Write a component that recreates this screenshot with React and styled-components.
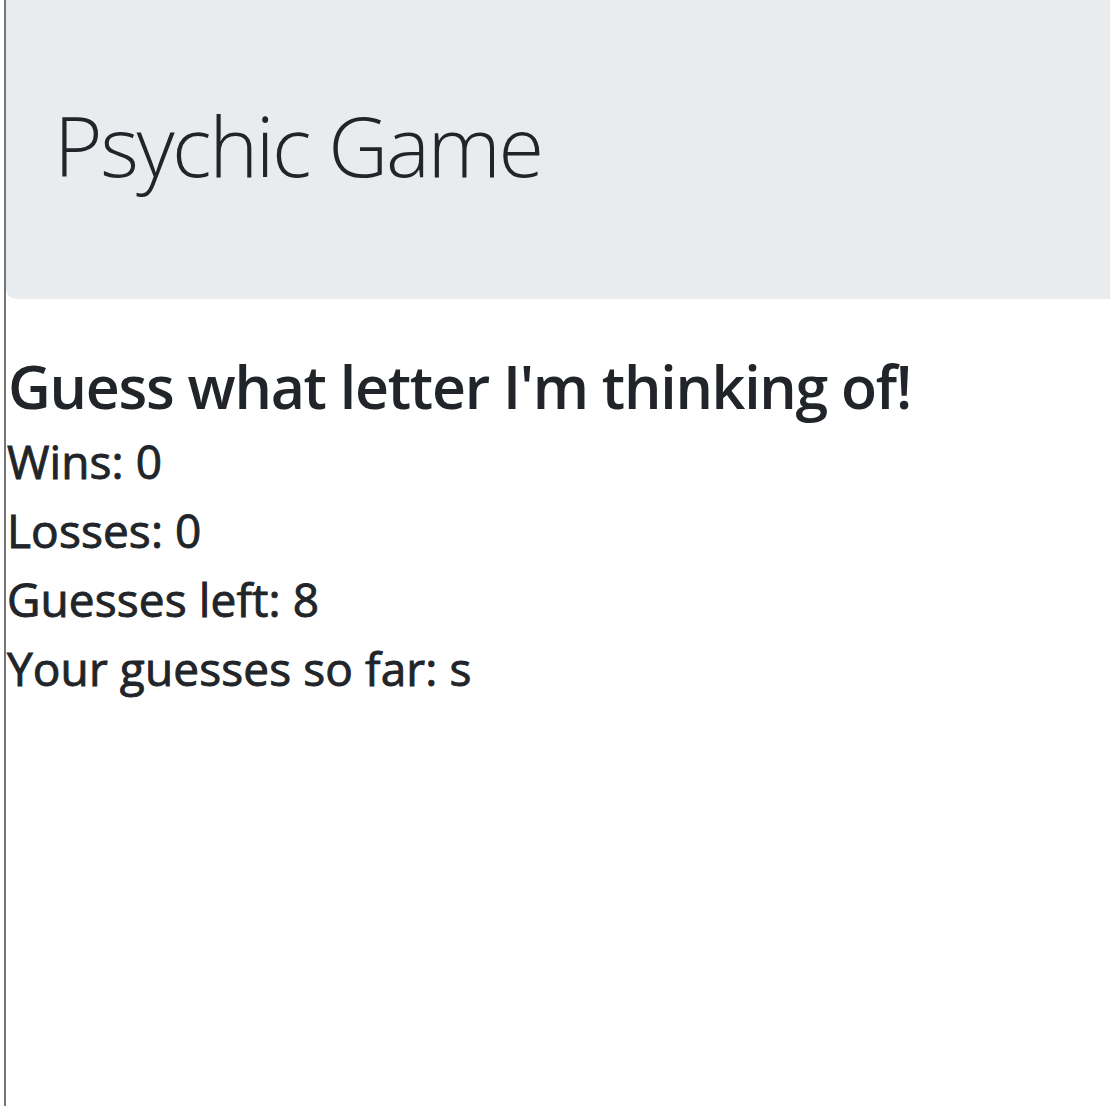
import React from "react";
import styled, { createGlobalStyle } from "styled-components";

const Global = createGlobalStyle`
  html, body { margin: 0; padding: 0; background: #fff; }
  body { font-family: "Open Sans", "Noto Sans", sans-serif; color: #212529; }
`;

const Page = styled.div`
  margin-left: 4px;
  border-left: 2px solid #767676;
  min-height: 1106px;
  box-sizing: border-box;
`;

const Jumbotron = styled.header`
  background: #e9ecef;
  border-bottom-left-radius: 10px;
  padding: 93px 48px 103px 48px;
`;

const Title = styled.h1`
  margin: 0;
  font-size: 83px;
  line-height: 103px;
  font-weight: 300;
  letter-spacing: -2.4px;
`;

const Heading = styled.h2`
  margin: 50px 0 4px 2px;
  font-size: 59px;
  line-height: 74px;
  font-weight: 600;
  letter-spacing: -1.25px;
`;

const Stat = styled.p`
  margin: 0 0 0 1px;
  font-size: 46px;
  line-height: 69px;
  font-weight: 400;
  letter-spacing: 0.1px;
  -webkit-text-stroke: 0.9px #212529;
`;

export default function App() {
  return (
    <>
      <Global />
      <Page>
        <Jumbotron>
          <Title>Psychic Game</Title>
        </Jumbotron>
        <Heading>Guess what letter I'm thinking of!</Heading>
        <Stat>Wins: 0</Stat>
        <Stat>Losses: 0</Stat>
        <Stat>Guesses left: 8</Stat>
        <Stat>Your guesses so far: s</Stat>
      </Page>
    </>
  );
}
